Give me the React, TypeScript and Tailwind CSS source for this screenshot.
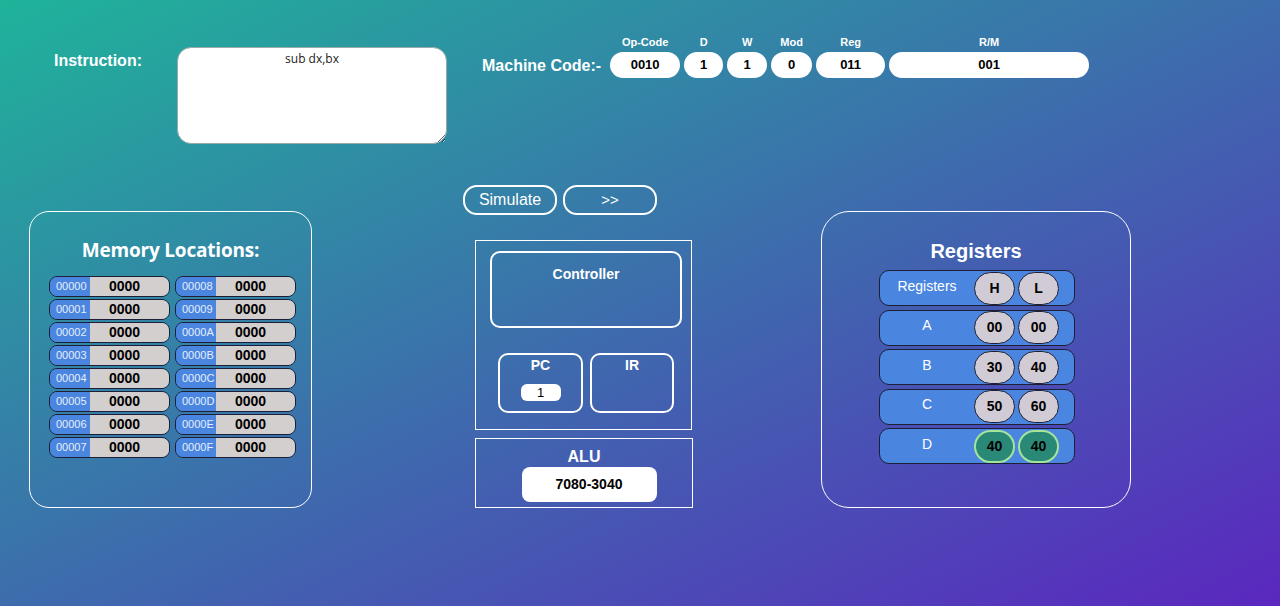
import React from "react";

const memLeft = ["00000", "00001", "00002", "00003", "00004", "00005", "00006", "00007"];
const memRight = ["00008", "00009", "0000A", "0000B", "0000C", "0000D", "0000E", "0000F"];

const codeFields = [
  { label: "Op-Code", value: "0010", w: "w-[70px]" },
  { label: "D", value: "1", w: "w-[39px]" },
  { label: "W", value: "1", w: "w-[40px]" },
  { label: "Mod", value: "0", w: "w-[41px]" },
  { label: "Reg", value: "011", w: "w-[69px]" },
  { label: "R/M", value: "001", w: "w-[200px]" },
];

const registers = [
  { name: "A", h: "00", l: "00", active: false },
  { name: "B", h: "30", l: "40", active: false },
  { name: "C", h: "50", l: "60", active: false },
  { name: "D", h: "40", l: "40", active: true },
];

function MemCell({ addr }: { addr: string }) {
  return (
    <div className="flex h-[21px] w-[121px] overflow-hidden rounded-[8px] border border-[#1c1f35]">
      <div className="flex w-[40px] items-center bg-[#4a86e0] pl-[6px] text-[11px] text-[#e6eefc]">
        {addr}
      </div>
      <div className="flex flex-1 items-center justify-center bg-[#d3cfcf] pr-[10px] text-[14px] font-bold text-black">
        0000
      </div>
    </div>
  );
}

function RegCircle({ value, active }: { value: string; active: boolean }) {
  return (
    <div
      className={
        active
          ? "flex h-[33px] w-[41px] items-center justify-center rounded-full border-2 border-[#a5e59a] bg-[#2a8877] text-[14px] font-bold text-black"
          : "flex h-[33px] w-[41px] items-center justify-center rounded-full border border-[#1c1f35] bg-[#d1cbd6] text-[14px] font-bold text-black"
      }
    >
      {value}
    </div>
  );
}

export default function App() {
  return (
    <div className="h-[606px] w-full overflow-hidden bg-[linear-gradient(to_bottom_right,#1fb39a,#5b27bf)] font-['Liberation_Sans',Arial,sans-serif] text-white">
      {/* Top row: instruction + machine code */}
      <div className="flex items-start pl-[54px] pt-[36px]">
        <div className="mt-[16px] w-[123px] text-[16px] font-bold leading-[18px]">Instruction:</div>
        <textarea
          defaultValue="sub dx,bx"
          spellCheck={false}
          className="mt-[11px] h-[97px] w-[270px] rounded-[14px] border border-[#9aa] bg-white px-2 pt-[2px] text-center font-['Open_Sans',sans-serif] text-[12px] text-[#222] outline-none"
        />
        <div className="ml-[35px] flex items-end">
          <div className="mb-[3px] mr-[9px] text-[16px] font-bold leading-[18px]">Machine Code:-</div>
          <div className="flex items-end gap-[4px]">
            {codeFields.map((f) => (
              <div key={f.label} className="flex flex-col items-center">
                <div className="mb-[3px] text-[11px] font-bold leading-[13px]">{f.label}</div>
                <div
                  className={`flex h-[26px] ${f.w} items-center justify-center rounded-full bg-white text-[13px] font-bold text-black`}
                >
                  {f.value}
                </div>
              </div>
            ))}
          </div>
        </div>
      </div>

      {/* Main section */}
      <div className="mt-[41px] flex items-start pl-[29px]">
        {/* Memory */}
        <div className="mt-[26px] h-[297px] w-[283px] rounded-[20px] border-[1.5px] border-white">
          <h2 className="pt-[24px] text-center font-['Open_Sans',sans-serif] text-[19px] font-bold leading-[28px] tracking-[-0.2px]">
            Memory Locations:
          </h2>
          <div className="ml-[19px] mt-[12px] flex gap-[5px]">
            <div className="flex flex-col gap-[2px]">
              {memLeft.map((a) => (
                <MemCell key={a} addr={a} />
              ))}
            </div>
            <div className="flex flex-col gap-[2px]">
              {memRight.map((a) => (
                <MemCell key={a} addr={a} />
              ))}
            </div>
          </div>
        </div>

        {/* CPU */}
        <div className="ml-[151px] flex w-[229px] flex-col">
          <div className="flex gap-[6px]">
            <button className="h-[30px] w-[94px] rounded-[14px] border-2 border-white text-[16px] text-white">
              Simulate
            </button>
            <button className="h-[30px] w-[94px] rounded-[14px] border-2 border-white text-[15px] text-white">
              &gt;&gt;
            </button>
          </div>
          <div className="ml-[12px] mt-[25px] h-[190px] w-[217px] border-[1.5px] border-white pl-[14px] pt-[10px]">
            <div className="h-[77px] w-[192px] rounded-[10px] border-2 border-white pt-[11px] text-center text-[14px] font-bold">
              Controller
            </div>
            <div className="ml-[8px] mt-[25px] flex gap-[7px]">
              <div className="flex h-[60px] w-[85px] flex-col items-center rounded-[10px] border-2 border-white pt-[1px]">
                <div className="text-[14px] font-bold leading-[18px]">PC</div>
                <div className="mt-[10px] flex h-[17px] w-[40px] items-center justify-center rounded-[6px] bg-white text-[13px] text-black">
                  1
                </div>
              </div>
              <div className="flex h-[60px] w-[84px] flex-col items-center rounded-[10px] border-2 border-white pt-[1px]">
                <div className="text-[14px] font-bold leading-[18px]">IR</div>
              </div>
            </div>
          </div>
          <div className="ml-[12px] mt-[8px] flex h-[70px] w-[218px] flex-col items-center border-[1.5px] border-white pt-[9px]">
            <div className="text-[16px] font-bold leading-[18px]">ALU</div>
            <div className="ml-[10px] mt-[1px] flex h-[35px] w-[135px] items-center justify-center rounded-[8px] bg-white text-[14px] font-bold text-black">
              7080-3040
            </div>
          </div>
        </div>

        {/* Registers */}
        <div className="ml-[129px] mt-[26px] h-[297px] w-[310px] rounded-[28px] border-[1.5px] border-white">
          <h2 className="pt-[27px] text-center text-[20px] font-bold leading-[24px]">Registers</h2>
          <div className="ml-[57px] mt-[7px] flex flex-col gap-[3.5px]">
            <div className="flex h-[36px] w-[196px] items-center rounded-[10px] border border-[#1c1f35] bg-[#4a86e0]">
              <div className="mb-[4px] w-[94px] text-center text-[14px]">Registers</div>
              <div className="flex gap-[3px]">
                <RegCircle value="H" active={false} />
                <RegCircle value="L" active={false} />
              </div>
            </div>
            {registers.map((r) => (
              <div
                key={r.name}
                className="flex h-[36px] w-[196px] items-center rounded-[10px] border border-[#1c1f35] bg-[#4a86e0]"
              >
                <div className="mb-[4px] w-[94px] text-center text-[14px]">{r.name}</div>
                <div className="flex gap-[3px]">
                  <RegCircle value={r.h} active={r.active} />
                  <RegCircle value={r.l} active={r.active} />
                </div>
              </div>
            ))}
          </div>
        </div>
      </div>
    </div>
  );
}
